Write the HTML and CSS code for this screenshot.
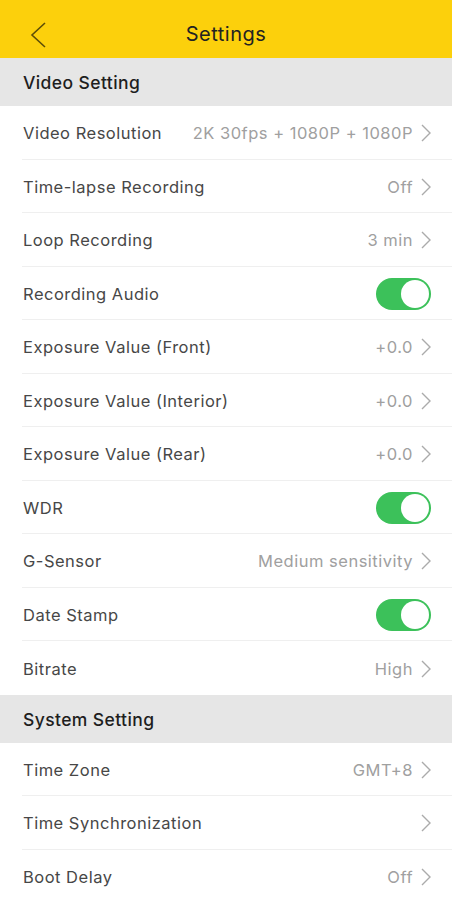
FILE: index.html
```html
<!DOCTYPE html>
<html lang="en">
<head>
    <meta charset="UTF-8">
    <meta name="viewport" content="width=device-width, initial-scale=1.0">
    <title>Settings</title>
    <link rel="stylesheet" href="styles.css">
</head>
<body>
    <div class="header">
        <svg class="back" width="16" height="26" viewBox="0 0 16 26">
            <polyline points="15,1 2,13 15,25" fill="none" stroke="#5c4d08" stroke-width="1.6"/>
        </svg>
        <h1>Settings</h1>
    </div>

    <div class="section">Video Setting</div>
    <div class="row">
        <span class="label">Video Resolution</span>
        <span class="value">2K 30fps + 1080P + 1080P</span>
        <svg class="arrow" viewBox="0 0 10 18"><polyline points="1,1 9,9 1,17"/></svg>
    </div>
    <div class="row">
        <span class="label">Time-lapse Recording</span>
        <span class="value">Off</span>
        <svg class="arrow" viewBox="0 0 10 18"><polyline points="1,1 9,9 1,17"/></svg>
    </div>
    <div class="row">
        <span class="label">Loop Recording</span>
        <span class="value">3 min</span>
        <svg class="arrow" viewBox="0 0 10 18"><polyline points="1,1 9,9 1,17"/></svg>
    </div>
    <div class="row">
        <span class="label">Recording Audio</span>
        <span class="switch"></span>
    </div>
    <div class="row">
        <span class="label">Exposure Value (Front)</span>
        <span class="value">+0.0</span>
        <svg class="arrow" viewBox="0 0 10 18"><polyline points="1,1 9,9 1,17"/></svg>
    </div>
    <div class="row">
        <span class="label">Exposure Value (Interior)</span>
        <span class="value">+0.0</span>
        <svg class="arrow" viewBox="0 0 10 18"><polyline points="1,1 9,9 1,17"/></svg>
    </div>
    <div class="row">
        <span class="label">Exposure Value (Rear)</span>
        <span class="value">+0.0</span>
        <svg class="arrow" viewBox="0 0 10 18"><polyline points="1,1 9,9 1,17"/></svg>
    </div>
    <div class="row">
        <span class="label">WDR</span>
        <span class="switch"></span>
    </div>
    <div class="row">
        <span class="label">G-Sensor</span>
        <span class="value">Medium sensitivity</span>
        <svg class="arrow" viewBox="0 0 10 18"><polyline points="1,1 9,9 1,17"/></svg>
    </div>
    <div class="row">
        <span class="label">Date Stamp</span>
        <span class="switch"></span>
    </div>
    <div class="row last">
        <span class="label">Bitrate</span>
        <span class="value">High</span>
        <svg class="arrow" viewBox="0 0 10 18"><polyline points="1,1 9,9 1,17"/></svg>
    </div>

    <div class="section">System Setting</div>
    <div class="row">
        <span class="label">Time Zone</span>
        <span class="value">GMT+8</span>
        <svg class="arrow" viewBox="0 0 10 18"><polyline points="1,1 9,9 1,17"/></svg>
    </div>
    <div class="row">
        <span class="label">Time Synchronization</span>
        <svg class="arrow" viewBox="0 0 10 18"><polyline points="1,1 9,9 1,17"/></svg>
    </div>
    <div class="row">
        <span class="label">Boot Delay</span>
        <span class="value">Off</span>
        <svg class="arrow" viewBox="0 0 10 18"><polyline points="1,1 9,9 1,17"/></svg>
    </div>
</body>
</html>
```

FILE: styles.css
```css
body {
    margin: 0;
    background-color: #ffffff;
    font-family: Inter, "Liberation Sans", sans-serif;
    color: #333333;
    overflow: hidden;
}

.header {
    background-color: #fcd00c;
    height: 58px;
    box-sizing: border-box;
    padding-top: 9px;
    display: flex;
    align-items: center;
    justify-content: center;
    position: relative;
}

.header h1 {
    margin: 0;
    font-size: 20px;
    font-weight: normal;
    letter-spacing: 0.5px;
    color: #222222;
}

.back {
    position: absolute;
    left: 30px;
    top: 22px;
}

.section {
    background-color: #e6e6e6;
    height: 48px;
    box-sizing: border-box;
    padding-top: 1px;
    display: flex;
    align-items: center;
    padding-left: 23px;
    font-size: 17.5px;
    font-weight: 500;
    letter-spacing: 0.4px;
    color: #1e1e1e;
}

.row {
    height: 53.5px;
    box-sizing: border-box;
    margin-left: 22px;
    padding-right: 21px;
    padding-top: 2px;
    border-bottom: 1px solid #efefef;
    display: flex;
    align-items: center;
    font-size: 16.5px;
    letter-spacing: 0.5px;
}

.row.last {
    border-bottom: none;
}

.label {
    flex: 1;
    padding-left: 1px;
    color: #474747;
}

.value {
    color: #a0a0a0;
    margin-right: 8px;
}

.arrow {
    width: 10px;
    height: 18px;
    fill: none;
    stroke: #ababab;
    stroke-width: 1.4;
}

.switch {
    width: 55px;
    height: 32px;
    border-radius: 16px;
    background-color: #3cc15a;
    position: relative;
}

.switch::after {
    content: "";
    position: absolute;
    right: 2px;
    top: 2px;
    width: 28px;
    height: 28px;
    border-radius: 50%;
    background-color: #ffffff;
}
```
